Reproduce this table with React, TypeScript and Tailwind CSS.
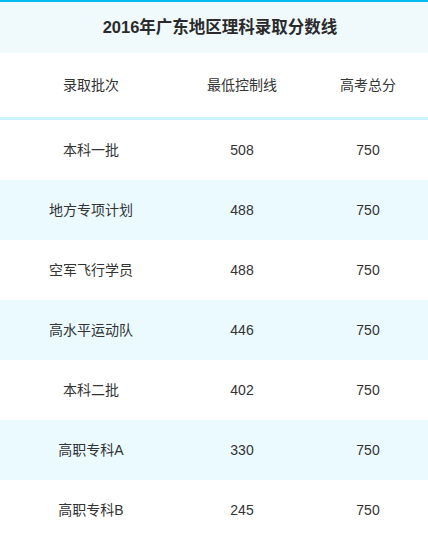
const rows = [
  { name: "本科一批", line: "508", total: "750" },
  { name: "地方专项计划", line: "488", total: "750" },
  { name: "空军飞行学员", line: "488", total: "750" },
  { name: "高水平运动队", line: "446", total: "750" },
  { name: "本科二批", line: "402", total: "750" },
  { name: "高职专科A", line: "330", total: "750" },
  { name: "高职专科B", line: "245", total: "750" },
];

export default function App() {
  return (
    <div
      className="w-[428px] h-[542px] bg-white text-[#333] overflow-hidden"
      style={{ fontFamily: '"Liberation Sans", "Noto Sans CJK SC", sans-serif' }}
    >
      <div className="h-[2px] bg-[#00bbee]" />
      <div className="h-[51px] bg-[#f0fafd] flex items-center justify-center pl-[12px] text-[16.5px] font-bold text-[#2b2b2b]">
        2016年广东地区理科录取分数线
      </div>
      <div className="grid grid-cols-[182px_120px_1fr] h-[64px] items-center text-center text-[14px]">
        <div>录取批次</div>
        <div>最低控制线</div>
        <div className="pl-[6px]">高考总分</div>
      </div>
      <div className="h-[3px] bg-[#ccf3fd]" />
      {rows.map((r, i) => (
        <div
          key={i}
          className={
            "grid grid-cols-[182px_120px_1fr] h-[60px] items-center text-center text-[14px] " +
            (i % 2 === 1 ? "bg-[#eafaff]" : "bg-white")
          }
        >
          <div>{r.name}</div>
          <div>{r.line}</div>
          <div className="pl-[6px]">{r.total}</div>
        </div>
      ))}
    </div>
  );
}
